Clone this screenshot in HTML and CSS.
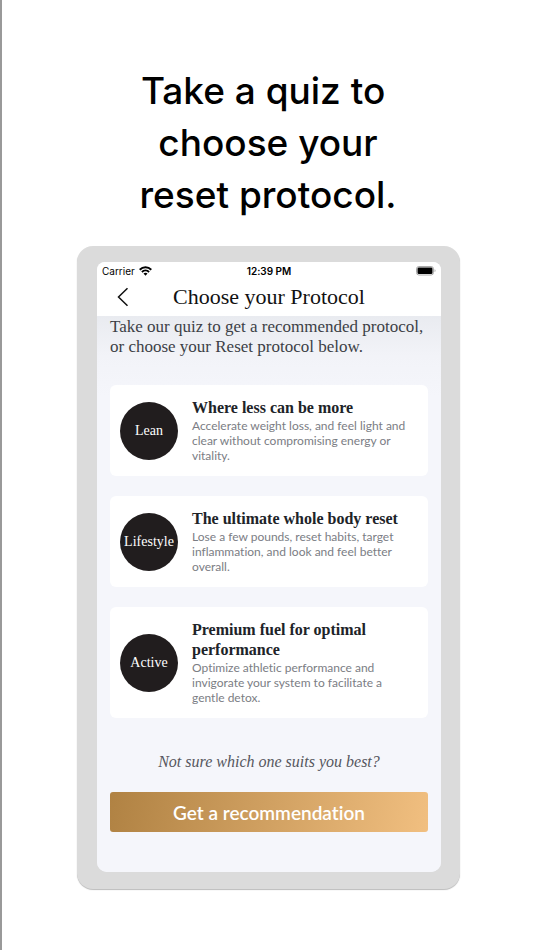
FILE: index.html
```html
<!DOCTYPE html>
<html lang="en">
<head>
    <meta charset="UTF-8">
    <meta name="viewport" content="width=device-width, initial-scale=1.0">
    <title>Choose your Protocol</title>
    <link rel="stylesheet" href="styles.css">
</head>
<body>
    <h1 class="headline">Take a quiz to&nbsp;<br>choose your<br>reset protocol.</h1>

    <div class="device">
        <div class="screen">
            <header class="top">
                <div class="status">
                    <span class="carrier">Carrier
                        <svg width="13" height="10" viewBox="0 0 13 10" aria-hidden="true">
                            <g fill="none" stroke="#000" stroke-width="1.9">
                                <path d="M0.7 3.7 C4 0.5 9 0.5 12.3 3.7"/>
                                <path d="M2.9 6 C5 4 8 4 10.1 6"/>
                            </g>
                            <path d="M4.5 7.6 C5.7 6.6 7.3 6.6 8.5 7.6 L6.5 9.7 Z"/>
                        </svg>
                    </span>
                    <span class="time">12:39 PM</span>
                    <svg class="battery" width="20" height="10" viewBox="0 0 20 10" aria-hidden="true">
                        <rect x="0.5" y="0.5" width="17" height="8.5" rx="2.4" fill="#fff" stroke="#aaa"/>
                        <rect x="1.5" y="1.5" width="15" height="6.5" rx="1.3"/>
                        <path d="M18.6 3.3 C19.8 3.8 19.8 5.7 18.6 6.2 Z" fill="#999"/>
                    </svg>
                </div>
                <div class="nav">
                    <button class="back" type="button" aria-label="Back">
                        <svg width="12" height="20" viewBox="0 0 12 20" aria-hidden="true">
                            <path d="M10.5 1.2 L1.5 10 L10.5 18.8" fill="none" stroke="#111" stroke-width="1.5"/>
                        </svg>
                    </button>
                    <h2>Choose your Protocol</h2>
                </div>
            </header>

            <main class="content">
                <p class="intro">Take our quiz to get a recommended protocol,<br>or choose your Reset protocol below.</p>

                <div class="cards">
                    <a class="card" href="#lean">
                        <span class="badge">Lean</span>
                        <div>
                            <h3>Where less can be more</h3>
                            <p>Accelerate weight loss, and feel light and<br>clear without compromising energy or<br>vitality.</p>
                        </div>
                    </a>
                    <a class="card" href="#lifestyle">
                        <span class="badge">Lifestyle</span>
                        <div>
                            <h3>The ultimate whole body reset</h3>
                            <p>Lose a few pounds, reset habits, target<br>inflammation, and look and feel better<br>overall.</p>
                        </div>
                    </a>
                    <a class="card" href="#active">
                        <span class="badge">Active</span>
                        <div>
                            <h3>Premium fuel for optimal<br>performance</h3>
                            <p>Optimize athletic performance and<br>invigorate your system to facilitate a<br>gentle detox.</p>
                        </div>
                    </a>
                </div>

                <p class="hint">Not sure which one suits you best?</p>
                <button class="cta" type="button">Get a recommendation</button>
            </main>
        </div>
    </div>
</body>
</html>
```

FILE: styles.css
```css
* {
    box-sizing: border-box;
}
body {
    margin: 0;
    padding: 65px 0 60px;
    min-height: 100vh;
    border-left: 2px solid #999;
    background-color: #fff;
    font-family: Lato, "Liberation Sans", sans-serif;
    font-variant-ligatures: none;
}
h1, h2, h3, p {
    margin: 0;
    font-weight: 400;
}
.headline {
    font-family: Inter, "Liberation Sans", sans-serif;
    font-size: 37px;
    font-weight: 500;
    line-height: 52px;
    text-align: center;
    color: #000;
}
.device {
    margin: 25px 74px 0 75px;
    padding: 16px 19px 17px 20px;
    border-radius: 16px;
    background-color: #dbdbdb;
    box-shadow: 0 1px 1px #bbb;
}
.screen {
    overflow: hidden;
    border-radius: 8px 8px 10px 10px;
    background-color: #f5f6fb;
}
.top {
    background-color: #fff;
}
.status {
    display: grid;
    grid-template-columns: 1fr auto 1fr;
    align-items: center;
    height: 18px;
    padding: 0 5px;
    font-family: Inter, "Liberation Sans", sans-serif;
    font-size: 10px;
    color: #000;
}
.carrier {
    display: flex;
    align-items: center;
    gap: 4px;
}
.time {
    font-weight: 600;
}
.battery {
    justify-self: end;
}
.nav {
    display: grid;
    grid-template-columns: 52px 1fr 52px;
    align-items: center;
    height: 36px;
    padding-bottom: 3px;
}
.nav h2 {
    font-family: "Liberation Serif", serif;
    font-size: 22px;
    line-height: 28px;
    text-align: center;
    white-space: nowrap;
    color: #111;
}
.back {
    display: flex;
    justify-content: center;
    padding: 0;
    border: none;
    background: none;
    cursor: pointer;
}
.content {
    display: flex;
    flex-direction: column;
    padding: 1px 13px 40px;
    background: linear-gradient(#e9ebf0, #f2f3f8 40px, #f5f6fb 80px);
}
.intro {
    font-family: "Liberation Serif", serif;
    font-size: 17px;
    line-height: 20px;
    white-space: nowrap;
    color: #3c3f46;
}
.cards {
    display: flex;
    flex-direction: column;
    gap: 20px;
    margin-top: 28px;
}
.card {
    display: flex;
    align-items: center;
    gap: 14px;
    padding: 13px 10px;
    border-radius: 6px;
    background-color: #fff;
    text-decoration: none;
}
.badge {
    display: flex;
    flex: none;
    align-items: center;
    justify-content: center;
    width: 58px;
    height: 58px;
    border-radius: 50%;
    background-color: #211d1e;
    font-family: "Liberation Serif", serif;
    font-size: 14px;
    color: #fff;
}
.card h3 {
    font-family: "Liberation Serif", serif;
    font-size: 16px;
    font-weight: 700;
    line-height: 20px;
    white-space: nowrap;
    color: #202328;
}
.card p {
    font-size: 12px;
    line-height: 15px;
    white-space: nowrap;
    color: #7b7d84;
}
.hint {
    margin-top: 34px;
    font-family: "Liberation Serif", serif;
    font-size: 16px;
    font-style: italic;
    line-height: 20px;
    text-align: center;
    color: #55575e;
}
.cta {
    height: 40px;
    margin-top: 20px;
    border: none;
    border-radius: 3px;
    background: linear-gradient(100deg, #b08243, #f1bf80);
    font-family: Lato, "Liberation Sans", sans-serif;
    font-size: 19px;
    font-weight: 600;
    font-variant-ligatures: none;
    color: #fff;
    cursor: pointer;
}
```
